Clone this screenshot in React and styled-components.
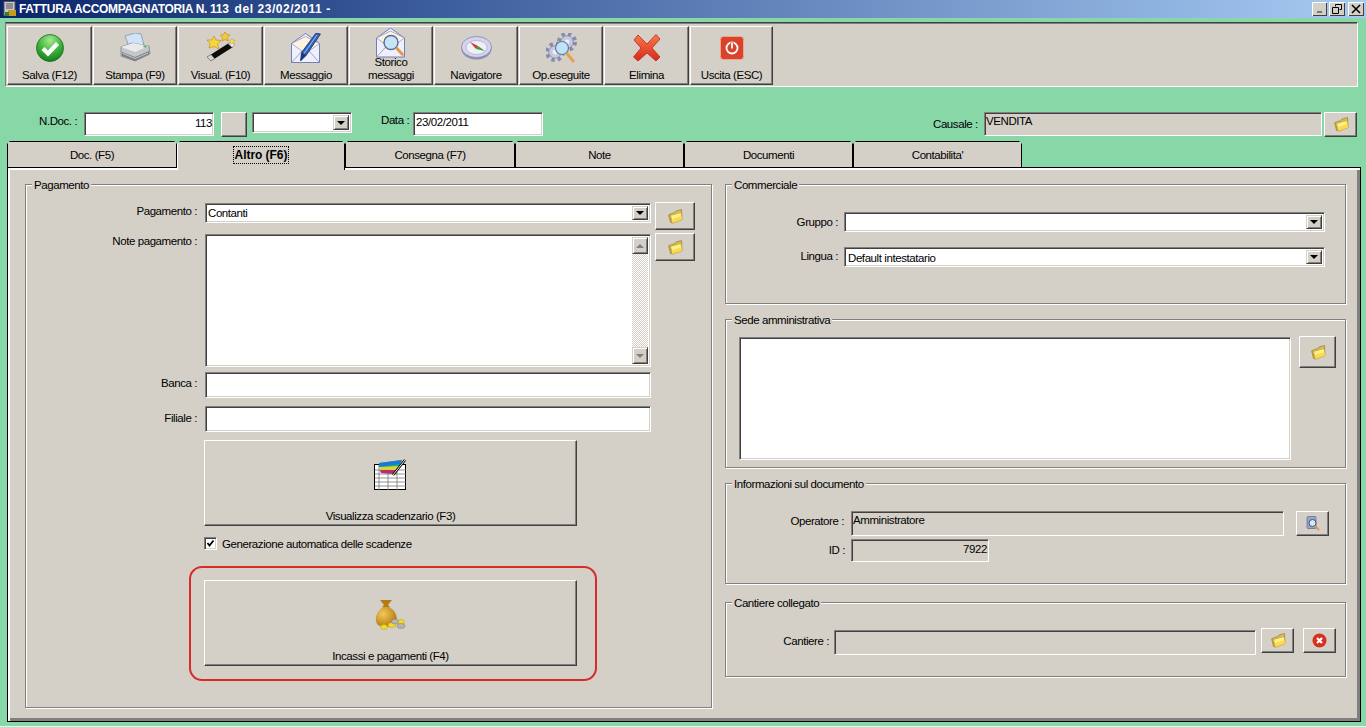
import React from 'react';
import styled, { createGlobalStyle } from 'styled-components';

const UI = `"Liberation Sans", Arial, sans-serif`;
const TRACK = '-.42px';
const Global = createGlobalStyle`
  html, body { margin: 0; padding: 0; background: #87d7a7; }
  * { box-sizing: border-box; }
  body { font: 11.5px/14px ${UI}; letter-spacing: ${TRACK}; color: #000; }
`;
const Page = styled.div`width: 1366px; height: 728px; overflow: hidden; background: #87d7a7;`;
const TitleBar = styled.div`
  height: 18px; display: flex; align-items: center; padding: 0 2px 0 3px; color: #fff;
  background: linear-gradient(90deg, #0a246a 0%, #3b5c9b 31%, #6687bd 58%, #8fb3e0 85%, #a6caf0 100%);
`;
const TitleText = styled.span`font: bold 12px/16px "Liberation Sans", sans-serif; margin-left: 2px; white-space: pre; flex: 1; letter-spacing: -.32px;`;
const TitleTail = styled.span`letter-spacing: .55px;`;
const WinBtn = styled.button`
  width: ${p => p.$w || 16}px; height: 14px; padding: 0; margin-left: ${p => p.$ml || 2}px; border: 0; background: #d4d0c8; display: flex; align-items: center; justify-content: center;
  box-shadow: inset 1px 1px 0 #fff, inset -1px -1px 0 #404040;
`;
const ToolbarBox = styled.div`
  margin: 4px 8px 0 5px; height: 65px; background: #d4d0c8; display: flex; gap: 1px; padding: 3px 0 0 1px;
  border-top: 1px solid #404040; border-left: 1px solid #808080; border-right: 1px solid #fff; border-bottom: 1px solid #fff;
  box-shadow: inset 0 1px 0 #808080;
`;
const ToolButton = styled.button`
  width: ${p => p.$w}px; height: 59px; padding: 0; border: 1px solid; border-color: #fff #404040 #404040 #fff; background: #d4d0c8;
  box-shadow: inset -1px -1px 0 #808080; display: flex; flex-direction: column; align-items: center; position: relative;
  font: 11.5px/13px ${UI}; letter-spacing: ${TRACK}; color: #000; text-align: center;
`;
const ToolIcon = styled.span`display: flex; margin-top: ${p => p.$top}px;`;
const ToolLabel = styled.span`position: absolute; left: 0; right: 0; bottom: 2px; white-space: pre-line;`;
const FormRow = styled.div`
  margin-top: 25px; height: 24px; display: grid; padding-left: 39px; align-items: start;
  grid-template-columns: 45px 130px 7px 26px 5px 100px 29px 32px 130px 390px 51px 338px 2px 33px;
`;
const Lab = styled.span`white-space: nowrap; position: relative; top: ${p => p.$t || 0}px;`;
const sunken = `
  background: #fff; border: 1px solid; border-color: #808080 #fff #fff #808080;
  box-shadow: inset 1px 1px 0 #404040, inset -1px -1px 0 #d4d0c8;
`;
const Field = styled.div`
  ${sunken} width: ${p => p.$w ? p.$w + 'px' : 'auto'}; height: ${p => p.$h || 24}px; background: ${p => p.$off ? '#d4d0c8' : '#fff'};
  padding: ${p => p.$pt || 3}px ${p => p.$pr ?? 3}px 0 ${p => p.$pl ?? 3}px; text-align: ${p => p.$right ? 'right' : 'left'}; flex: none; white-space: nowrap;
`;
const PlainBtn = styled.button`
  width: ${p => p.$w || 33}px; height: ${p => p.$h || 25}px; margin: ${p => p.$mt || 0}px 0 0 ${p => p.$ml || 0}px; padding: 0; flex: none;
  border: 1px solid; border-color: #fff #404040 #404040 #fff; background: #d4d0c8; box-shadow: inset -1px -1px 0 #808080;
  display: flex; align-items: center; justify-content: center;
`;
const Combo = styled.div`
  ${sunken} width: ${p => p.$w ? p.$w + 'px' : 'auto'}; height: ${p => p.$h || 20}px; display: flex; padding: 2px; flex: none;
`;
const ComboText = styled.span`flex: 1; padding: ${p => p.$pt ?? 1}px ${p => p.$pl ?? 1}px;`;
const ArrowBtn = styled.span`
  width: 16px; flex: none; background: #d4d0c8; border: 1px solid; border-color: #d4d0c8 #404040 #404040 #d4d0c8; box-shadow: inset 1px 1px 0 #fff, inset -1px -1px 0 #808080;
  display: flex; align-items: center; justify-content: center; height: ${p => p.$h ? p.$h + 'px' : 'auto'};
`;
const Tri = styled.i`
  width: 0; height: 0; border-left: 4px solid transparent; border-right: 4px solid transparent;
  ${p => p.$up ? `border-bottom: 4px solid ${p.$c || '#808080'};` : `border-top: 4px solid ${p.$c || '#000'};`}
`;
const Tabs = styled.div`display: flex; padding-left: 7px; margin-top: 5px; height: 26px; position: relative; z-index: 1;`;
const Tab = styled.div`
  width: ${p => p.$w}px; height: ${p => p.$on ? 29 : 27}px; background-color: #d4d0c8; text-align: center; flex: none;
  border-top: 1px solid #000; border-right: 1px solid #000; border-left: 1px solid ${p => p.$on ? '#fff' : '#000'};
  border-bottom: ${p => p.$on ? '0' : '1px solid #000'}; padding-top: 6px;
  clip-path: polygon(3px 0, calc(100% - 3px) 0, 100% 3px, 100% 100%, 0 100%, 0 3px);
`;
const Focus = styled.span`outline: 1px dotted #000; padding: 1px; font: bold 12px/14px "Liberation Sans", sans-serif; letter-spacing: -.05px;`;
const Panel = styled.div`
  margin: 0 5px 0 7px; height: 555px; background: #d4d0c8; border: 1px solid #000; box-shadow: inset 2px 2px 0 #fff, inset -3px -3px 0 #808080;
  padding: 16px 0 0 17px; display: grid; grid-template-columns: 687px 621px; column-gap: 13px; align-items: start;
`;
const BottomEdge = styled.div`margin-top: 4px; height: 1px; background: #eef2ee; box-shadow: 0 1px 0 #c8d8cc;`;
const Col = styled.div`display: flex; flex-direction: column;`;
const Group = styled.section`
  position: relative; height: ${p => p.$h}px; margin-top: ${p => p.$mt || 0}px; border: 1px solid #808080; box-shadow: inset 1px 1px 0 #fff, 1px 1px 0 #fff; display: flex; flex-direction: column;
`;
const Legend = styled.span`position: absolute; left: 6px; top: -7px; background: #d4d0c8; padding: 0 2px;`;
const Row = styled.div`display: flex; align-items: flex-start; margin-top: ${p => p.$mt || 0}px; margin-left: ${p => p.$ml || 0}px;`;
const RowLabel = styled.label`
  width: ${p => p.$w}px; margin-right: ${p => p.$gap || 8}px; text-align: right; flex: none; padding-top: ${p => p.$pt ?? 3}px;
`;
const TextArea = styled.div`${sunken} width: ${p => p.$w}px; height: ${p => p.$h}px; display: flex; justify-content: flex-end; padding: 2px; flex: none;`;
const ScrollBar = styled.div`
  width: 16px; display: flex; flex-direction: column; justify-content: space-between;
  background-image: repeating-conic-gradient(#fff 0 25%, #d4d0c8 0 50%); background-size: 2px 2px;
`;
const BigButton = styled.button`
  width: 373px; height: 86px; padding: 0; border: 1px solid; border-color: #fff #404040 #404040 #fff; background: #d4d0c8; box-shadow: inset -1px -1px 0 #808080;
  display: flex; flex-direction: column; align-items: center; font: 11.5px/14px ${UI}; letter-spacing: ${TRACK}; color: #000; flex: none;
`;
const BigIcon = styled.span`height: 36px; margin-top: 18px; margin-bottom: 14px; display: flex;`;
const CheckBox = styled.span`
  ${sunken} width: 13px; height: 13px; display: flex; align-items: center; justify-content: center; flex: none; margin-right: 5px;
`;
const Highlight = styled.div`
  margin: 15px 0 0 163px; width: 408px; height: 115px; border: 2px solid #d92a2a; border-radius: 13px; padding: 12px 0 0 13px;
`;

const Folder = () => (
  <svg width="16" height="15" viewBox="0 0 16 15">
    <path d="M2 5.500 L8 3.500 L9 2 L14.500 .5 L15 10.500 L6 14 L3.500 13.500 Z" fill="#d8bc55" stroke="#a08838" strokeWidth=".8"/>
    <path d="M1 6 L2.500 5.500 L5 13.500 L3.500 13 Z" fill="#b89a3a"/>
    <path d="M3.500 6.500 L14 3.500 L15 10.500 L5.500 14 Z" fill="#fff08a" stroke="#c4a83e" strokeWidth=".7"/>
    <path d="M5.500 10 L14.500 7 L15 10.500 L5.500 14 Z" fill="#ffd84e"/>
  </svg>
);
const Check = () => (
  <svg width="28" height="28" viewBox="0 0 28 28">
    <defs><radialGradient id="g1" cx=".5" cy=".22" r=".85"><stop offset="0" stopColor="#a8e892"/><stop offset=".5" stopColor="#3eb43a"/><stop offset="1" stopColor="#0f7218"/></radialGradient></defs>
    <circle cx="14" cy="14" r="13.500" fill="url(#g1)" stroke="#1a6a22" strokeWidth=".8"/>
    <path d="M7 14.500 L12 19.500 L21.500 9.500" fill="none" stroke="#fff" strokeWidth="4.200"/>
  </svg>
);
const Printer = () => (
  <svg width="31" height="30" viewBox="0 0 31 30">
    <path d="M5 3 L15 0 L21 1 L24 12 L10 16 Z" fill="#cfe4f7" stroke="#7a8a9c" strokeWidth=".7"/>
    <path d="M1 14 L12 10 L29 13 L30 21 L15 28 L1 23 Z" fill="#c4c6ca" stroke="#70747c" strokeWidth=".7"/>
    <path d="M1 14 L15 19 L29 13 L13 10 Z" fill="#eaeaec"/>
    <path d="M2 19 L15 24 L29 18 L29 21 L15 28 L2 23 Z" fill="#7c7f86"/>
    <path d="M3 20.500 L15 25.500 L28 20" fill="none" stroke="#d8d8dc" strokeWidth=".8"/>
    <ellipse cx="25" cy="13.500" rx="1.800" ry="1" fill="#4caf50"/>
  </svg>
);
const Wand = () => (
  <svg width="30" height="30" viewBox="0 0 30 30">
    <path d="M1 25 L23 11 L27 15 L5 29 Z" fill="#0d0d0d"/>
    <path d="M1 25 L5 22.500 L8.500 26.500 L5 29 Z" fill="#d4d4d4" stroke="#666" strokeWidth=".5"/>
    <path d="M22 11.500 L25.500 9.500 L29 13 L26 15.500 Z" fill="#e4e4e4" stroke="#777" strokeWidth=".5"/>
    <path d="M8 4 L10 8 L15 8.500 L11.500 12 L13 17 L8 14.500 L3 16 L4 11.500 L1 8 L6 8 Z" fill="#f8d53c" stroke="#b58a10" strokeWidth=".6"/>
    <path d="M19 0 L20.500 2.500 L24 3 L21.500 5.500 L22 9 L19 7.500 L16 9 L16.500 5.500 L14.500 3 L17.500 2.500 Z" fill="#f6c93a" stroke="#b58a10" strokeWidth=".6"/>
    <path d="M26 6 L27 8 L29.500 8.500 L27.500 10 L28 12 L26 11 L24 12 L24.500 10 L23 8.500 L25 8 Z" fill="#f8dc50" stroke="#c09a20" strokeWidth=".4"/>
  </svg>
);
const Env = () => (
  <g>
    <path d="M0 10 L14 0 L28 10 L28 29 L0 29 Z" fill="#eef0fb" stroke="#6a70b0" strokeWidth=".9"/>
    <path d="M0 10 L14 20 L28 10 L14 3 Z" fill="#fdf3dc" stroke="#8a8fc8" strokeWidth=".7"/>
    <path d="M.5 28.500 L11 17 M27.500 28.500 L17 17" stroke="#8a8fc8" strokeWidth=".8" fill="none"/>
  </g>
);
const MailPen = () => (
  <svg width="30" height="30" viewBox="0 0 30 30">
    <g transform="translate(0.500 0.500)"><Env/></g>
    <path d="M29.500 1 L15.500 22 L9.500 28 L10.500 19.500 L25 0 Z" fill="#2a5fb8" stroke="#12285a" strokeWidth=".7"/>
    <path d="M10.500 19.500 L15.500 22 L9.500 28 Z" fill="#1c3a7a"/>
    <path d="M26 2 L13 20.500" stroke="#8ab4ee" strokeWidth="1.200"/>
  </svg>
);
const MailSearch = () => (
  <svg width="30" height="30" viewBox="0 0 30 30">
    <g transform="translate(0.500 0)"><Env/></g>
    <circle cx="15" cy="14.500" r="7" fill="#c6e6f8" stroke="#5a6a96" strokeWidth="1.400"/>
    <path d="M20 19.500 L27 27" stroke="#e09a4a" strokeWidth="3"/>
  </svg>
);
const Compass = () => (
  <svg width="31" height="24" viewBox="0 0 31 24">
    <ellipse cx="15.500" cy="13" rx="15" ry="10.500" fill="#8e8eae"/>
    <ellipse cx="15.500" cy="11" rx="15" ry="10.500" fill="#d4d4f0" stroke="#7a7aa0" strokeWidth=".7"/>
    <ellipse cx="15.500" cy="11.500" rx="10.500" ry="7" fill="#efeff8" stroke="#a0a0c0" strokeWidth=".6"/>
    <path d="M9 6 L17 10 L15 13 Z" fill="#d2342a"/>
    <path d="M17 10 L24 15 L15 13 Z" fill="#3a9a3a"/>
  </svg>
);
const Gear = ({ x, y, r }) => (
  <g transform={`translate(${x} ${y})`}>
    <circle r={r} fill="none" stroke="#868cae" strokeWidth={r * 0.5} strokeDasharray={`${r * .42} ${r * .38}`}/>
    <circle r={r * .78} fill="#c6c9e0" stroke="#7076a0" strokeWidth=".6"/>
    <circle r={r * .3} fill="#f0f0fa"/>
  </g>
);
const Gears = () => (
  <svg width="31" height="30" viewBox="0 0 31 30">
    <Gear x={21} y={9} r={8}/><Gear x={9} y={19} r={8}/>
    <circle cx="16" cy="15" r="6.500" fill="#bfe4f8" stroke="#6a7a9a" strokeWidth="1.200"/>
    <path d="M20.500 20 L28 29" stroke="#e8a050" strokeWidth="3"/>
  </svg>
);
const RedX = () => (
  <svg width="28" height="28" viewBox="0 0 28 28">
    <defs><linearGradient id="rx" x1="0" y1="0" x2="0" y2="1"><stop offset="0" stopColor="#fb7a4a"/><stop offset="1" stopColor="#d8281a"/></linearGradient></defs>
    <path d="M5 1 L14 10 L23 .5 L27 5 L19 14 L27 23 L23 27 L14 19 L5 27 L.5 23 L8 14 L1 6 Z" fill="url(#rx)" stroke="#b02a18" strokeWidth=".8" strokeLinejoin="round"/>
  </svg>
);
const Power = () => (
  <svg width="24" height="24" viewBox="0 0 24 24">
    <rect x=".5" y=".5" width="23" height="23" rx="3" fill="#d9432c" stroke="#f2a58c"/>
    <circle cx="12" cy="12" r="5.500" fill="none" stroke="#fff" strokeWidth="1.800"/>
    <path d="M12 6.500 V12.500" stroke="#d9432c" strokeWidth="3.500"/>
    <path d="M12 7 V12.500" stroke="#fff" strokeWidth="1.800"/>
  </svg>
);
const Sheet = () => (
  <svg width="33" height="32" viewBox="0 0 33 32">
    <rect x=".5" y="5.500" width="31" height="25" fill="#fff" stroke="#000"/>
    <path d="M5 6 V31 M1 11 H32 M1 15 H32 M1 19 H32 M1 23 H32 M1 27 H32 M14 11 V31 M23 11 V31" stroke="#777" strokeWidth=".8"/>
    <path d="M5 4 L28 1 L22 15 L7 14 Z" fill="#1fb070"/>
    <path d="M5 4 L28 1 L26 5 L5 8 Z" fill="#1a7ad8"/>
    <path d="M6 11 L23 11 L22 15 L7 14 Z" fill="#c02a6a"/>
    <path d="M6 8 L25 7 L23 11 L6 11 Z" fill="#d8d43a"/>
    <path d="M31 1 L19 16" stroke="#000" strokeWidth="2.500"/>
    <path d="M31 1 L19 16" stroke="#eee" strokeWidth="1"/>
  </svg>
);
const Bag = () => (
  <svg width="31" height="32" viewBox="0 0 31 32">
    <defs><radialGradient id="bg" cx=".35" cy=".35" r=".8"><stop offset="0" stopColor="#f3c85a"/><stop offset="1" stopColor="#a86f08"/></radialGradient></defs>
    <path d="M5 1 L17 1 L13 6 L15 8 L7 8 L9 6 Z" fill="#b57c10"/>
    <path d="M8 8 L14 8 C21 12 23 18 21 24 C19 29 5 29 2 25 C-1 19 2 12 8 8 Z" fill="url(#bg)"/>
    <ellipse cx="9" cy="28" rx="3.500" ry="2.500" fill="#f2d92a" stroke="#b59a10" strokeWidth=".5"/>
    <ellipse cx="17" cy="26" rx="4" ry="2.500" fill="#f2d92a" stroke="#b59a10" strokeWidth=".5"/>
    <ellipse cx="26" cy="23" rx="3.500" ry="2.500" fill="#f2d92a" stroke="#b59a10" strokeWidth=".5"/>
    <ellipse cx="20" cy="22.500" rx="3.500" ry="2.500" fill="#b4b4b4" stroke="#777" strokeWidth=".5"/>
    <ellipse cx="26" cy="27" rx="4" ry="2.500" fill="#b4b4b4" stroke="#777" strokeWidth=".5"/>
  </svg>
);
const DocSearch = () => (
  <svg width="14" height="15" viewBox="0 0 14 15">
    <rect x="1" y="0.500" width="9" height="12" rx="1" fill="#9aa2d0" stroke="#6a70a0" strokeWidth=".8"/>
    <circle cx="6.500" cy="7" r="3.500" fill="#c8ecf8" stroke="#445" strokeWidth=".9"/>
    <path d="M9 10 L13 14" stroke="#d8945a" strokeWidth="1.800"/>
  </svg>
);
const RedCircleX = () => (
  <svg width="15" height="15" viewBox="0 0 15 15">
    <circle cx="7.500" cy="7.500" r="7" fill="#d8301f"/>
    <path d="M5 5 L10 10 M10 5 L5 10" stroke="#fff" strokeWidth="2.200"/>
  </svg>
);
const AppIcon = () => (
  <svg width="14" height="16" viewBox="0 0 14 16">
    <rect x="1" y="0.500" width="11" height="14" fill="#c8c8d0" stroke="#555"/>
    <path d="M3 3 H10 M3 5 H10 M3 7 H10" stroke="#555"/>
    <rect x="5" y="9" width="8" height="6" fill="#c89a20"/>
    <rect x="2" y="11" width="4" height="4" fill="#3a7a3a"/>
  </svg>
);

const tools = [
  ['Salva (F12)', <Check/>, 7, 85],
  ['Stampa (F9)', <Printer/>, 6, 84],
  ['Visual. (F10)', <Wand/>, 5, 85],
  ['Messaggio', <MailPen/>, 6, 84],
  ['Storico\nmessaggi', <MailSearch/>, 1, 84],
  ['Navigatore', <Compass/>, 9, 84],
  ['Op.eseguite', <Gears/>, 6, 84],
  ['Elimina', <RedX/>, 7, 85],
  ['Uscita (ESC)', <Power/>, 9, 83],
];

export default function App() {
  return (
    <Page>
      <Global/>
      <TitleBar>
        <AppIcon/>
        <TitleText>FATTURA ACCOMPAGNATORIA N. 113  <TitleTail>del 23/02/2011 -</TitleTail></TitleText>
        <WinBtn $w={15}><svg width="8" height="8"><path d="M1 7 H6" stroke="#777" strokeWidth="2"/></svg></WinBtn>
        <WinBtn><svg width="10" height="10" fill="none" stroke="#000"><path d="M3.500 2.500 V.5 H9.500 V5.500 H7.500 M.5 3.500 H6.500 V9.500 H.5 Z"/></svg></WinBtn>
        <WinBtn $ml={3}><svg width="10" height="10" stroke="#000" strokeWidth="1.600"><path d="M1 1 L9 9 M9 1 L1 9"/></svg></WinBtn>
      </TitleBar>
      <ToolbarBox>
        {tools.map(([t, icon, top, w]) => (
          <ToolButton key={t} $w={w}>
            <ToolIcon $top={top}>{icon}</ToolIcon>
            <ToolLabel>{t}</ToolLabel>
          </ToolButton>
        ))}
      </ToolbarBox>
      <FormRow>
        <Lab $t={2}>N.Doc. :</Lab>
        <Field $right $h={24} $pr={1}>113</Field>
        <span/>
        <PlainBtn $w={26} $h={25}/>
        <span/>
        <Combo $h={21}><ComboText/><ArrowBtn><Tri/></ArrowBtn></Combo>
        <span/>
        <Lab $t={1}>Data :</Lab>
        <Field $h={24} $pt={2} $pl={2}>23/02/2011</Field>
        <span/>
        <Lab $t={5}>Causale :</Lab>
        <Field $off $h={24} $pt={1} $pl={1}>VENDITA</Field>
        <span/>
        <PlainBtn $w={33} $h={25}><Folder/></PlainBtn>
      </FormRow>
      <Tabs>
        <Tab $w={170}>Doc. (F5)</Tab>
        <Tab $w={168} $on><Focus>Altro (F6)</Focus></Tab>
        <Tab $w={170}>Consegna (F7)</Tab>
        <Tab $w={169}>Note</Tab>
        <Tab $w={169}>Documenti</Tab>
        <Tab $w={169}>Contabilita'</Tab>
      </Tabs>
      <Panel>
        <Col>
          <Group $h={524}>
            <Legend>Pagamento</Legend>
            <Row $mt={18}>
              <RowLabel $w={171} $pt={1}>Pagamento :</RowLabel>
              <Combo $w={446}><ComboText $pt={0} $pl={0}>Contanti</ComboText><ArrowBtn><Tri/></ArrowBtn></Combo>
              <PlainBtn $ml={4} $mt={-1} $w={40} $h={28}><Folder/></PlainBtn>
            </Row>
            <Row $mt={4}>
              <RowLabel $w={171} $pt={0}>Note pagamento :</RowLabel>
              <TextArea $w={446} $h={133}>
                <ScrollBar>
                  <ArrowBtn $h={17}><Tri $up/></ArrowBtn>
                  <ArrowBtn $h={17}><Tri $c="#808080"/></ArrowBtn>
                </ScrollBar>
              </TextArea>
              <PlainBtn $ml={4} $mt={-1} $w={40} $h={28}><Folder/></PlainBtn>
            </Row>
            <Row $mt={5}>
              <RowLabel $w={171} $pt={4}>Banca :</RowLabel>
              <Field $w={446} $h={26}/>
            </Row>
            <Row $mt={8}>
              <RowLabel $w={171} $pt={5}>Filiale :</RowLabel>
              <Field $w={446} $h={26}/>
            </Row>
            <Row $mt={8} $ml={178}>
              <BigButton>
                <BigIcon><Sheet/></BigIcon>
                Visualizza scadenzario (F3)
              </BigButton>
            </Row>
            <Row $mt={11} $ml={178}>
              <CheckBox><svg width="9" height="9"><path d="M1.500 4 L3.500 6.500 L7.500 1.500" fill="none" stroke="#000" strokeWidth="1.800"/></svg></CheckBox>
              <Lab $t={0}>Generazione automatica delle scadenze</Lab>
            </Row>
            <Highlight>
              <BigButton>
                <BigIcon><Bag/></BigIcon>
                Incassi e pagamenti (F4)
              </BigButton>
            </Highlight>
          </Group>
        </Col>
        <Col>
          <Group $h={120}>
            <Legend>Commerciale</Legend>
            <Row $mt={27}>
              <RowLabel $w={112} $gap={6} $pt={3}>Gruppo :</RowLabel>
              <Combo $w={481}><ComboText/><ArrowBtn><Tri/></ArrowBtn></Combo>
            </Row>
            <Row $mt={15}>
              <RowLabel $w={112} $gap={6} $pt={2}>Lingua :</RowLabel>
              <Combo $w={481}><ComboText>Default intestatario</ComboText><ArrowBtn><Tri/></ArrowBtn></Combo>
            </Row>
          </Group>
          <Group $h={149} $mt={15}>
            <Legend>Sede amministrativa</Legend>
            <Row $mt={17} $ml={13}>
              <Field $w={552} $h={123}/>
              <PlainBtn $ml={8} $mt={-1} $w={37} $h={32}><Folder/></PlainBtn>
            </Row>
          </Group>
          <Group $h={101} $mt={15}>
            <Legend>Informazioni sul documento</Legend>
            <Row $mt={27}>
              <RowLabel $w={118} $gap={7} $pt={3}>Operatore :</RowLabel>
              <Field $off $w={433} $h={25} $pt={1} $pl={1}>Amministratore</Field>
              <PlainBtn $ml={12} $w={33} $h={25}><DocSearch/></PlainBtn>
            </Row>
            <Row $mt={3}>
              <RowLabel $w={119} $gap={6} $pt={4}>ID :</RowLabel>
              <Field $off $right $w={138} $h={23} $pt={2} $pr={1}>7922</Field>
            </Row>
          </Group>
          <Group $h={75} $mt={18}>
            <Legend>Cantiere collegato</Legend>
            <Row $mt={27}>
              <RowLabel $w={103} $gap={5} $pt={4}>Cantiere :</RowLabel>
              <Field $off $w={422} $h={25}/>
              <PlainBtn $ml={5} $mt={-2} $w={33} $h={25}><Folder/></PlainBtn>
              <PlainBtn $ml={9} $mt={-2} $w={33} $h={25}><RedCircleX/></PlainBtn>
            </Row>
          </Group>
        </Col>
      </Panel>
      <BottomEdge/>
    </Page>
  );
}
